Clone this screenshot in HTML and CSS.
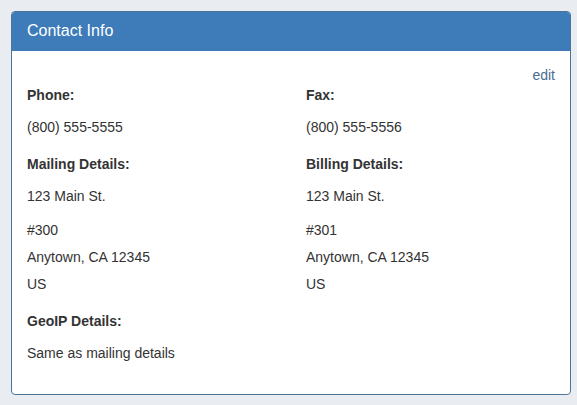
FILE: index.html
```html
<!DOCTYPE html>
<html>
<head>
<meta charset="utf-8">
<link rel="stylesheet" href="styles.css">
</head>
<body>
<div class="panel">
  <div class="panel-heading">Contact Info</div>
  <div class="panel-body">
    <div class="actions"><a class="edit" href="#">edit</a></div>
    <div class="grid">
      <div class="col">
        <div class="label">Phone:</div>
        <div class="value">(800) 555-5555</div>
      </div>
      <div class="col">
        <div class="label">Fax:</div>
        <div class="value">(800) 555-5556</div>
      </div>
      <div class="col">
        <div class="label">Mailing Details:</div>
        <div class="value">123 Main St.</div>
        <div class="addr">
          <div>#300</div>
          <div>Anytown, CA 12345</div>
          <div>US</div>
        </div>
      </div>
      <div class="col">
        <div class="label">Billing Details:</div>
        <div class="value">123 Main St.</div>
        <div class="addr">
          <div>#301</div>
          <div>Anytown, CA 12345</div>
          <div>US</div>
        </div>
      </div>
      <div class="col">
        <div class="label">GeoIP Details:</div>
        <div class="value">Same as mailing details</div>
      </div>
    </div>
  </div>
</div>
</body>
</html>
```

FILE: styles.css
```css
html, body {
  margin: 0;
  padding: 0;
  background: #e9edf2;
}
body {
  padding: 11px 7px 10px 11px;
  font-family: "Liberation Sans", Arial, sans-serif;
  font-size: 14px;
  line-height: 20px;
  color: #333;
}
.panel {
  width: 558px;
  height: 382px;
  border: 1px solid #4e7399;
  border-radius: 4px;
  background: #fff;
  overflow: hidden;
}
.panel-heading {
  background: #3d7bb9;
  color: #fff;
  font-size: 16px;
  height: 39px;
  line-height: 38px;
  padding: 0 15px;
  box-sizing: border-box;
}
.panel-body {
  padding: 14px 15px 15px 15px;
}
.actions {
  display: flex;
  justify-content: flex-end;
}
.edit {
  color: #476d94;
  text-decoration: none;
}
.grid {
  display: grid;
  grid-template-columns: 1fr 1fr;
  column-gap: 30px;
  row-gap: 17px;
}
.label {
  font-weight: bold;
  margin-bottom: 12px;
}
.addr {
  margin-top: 14px;
  display: flex;
  flex-direction: column;
  gap: 7px;
}
```
